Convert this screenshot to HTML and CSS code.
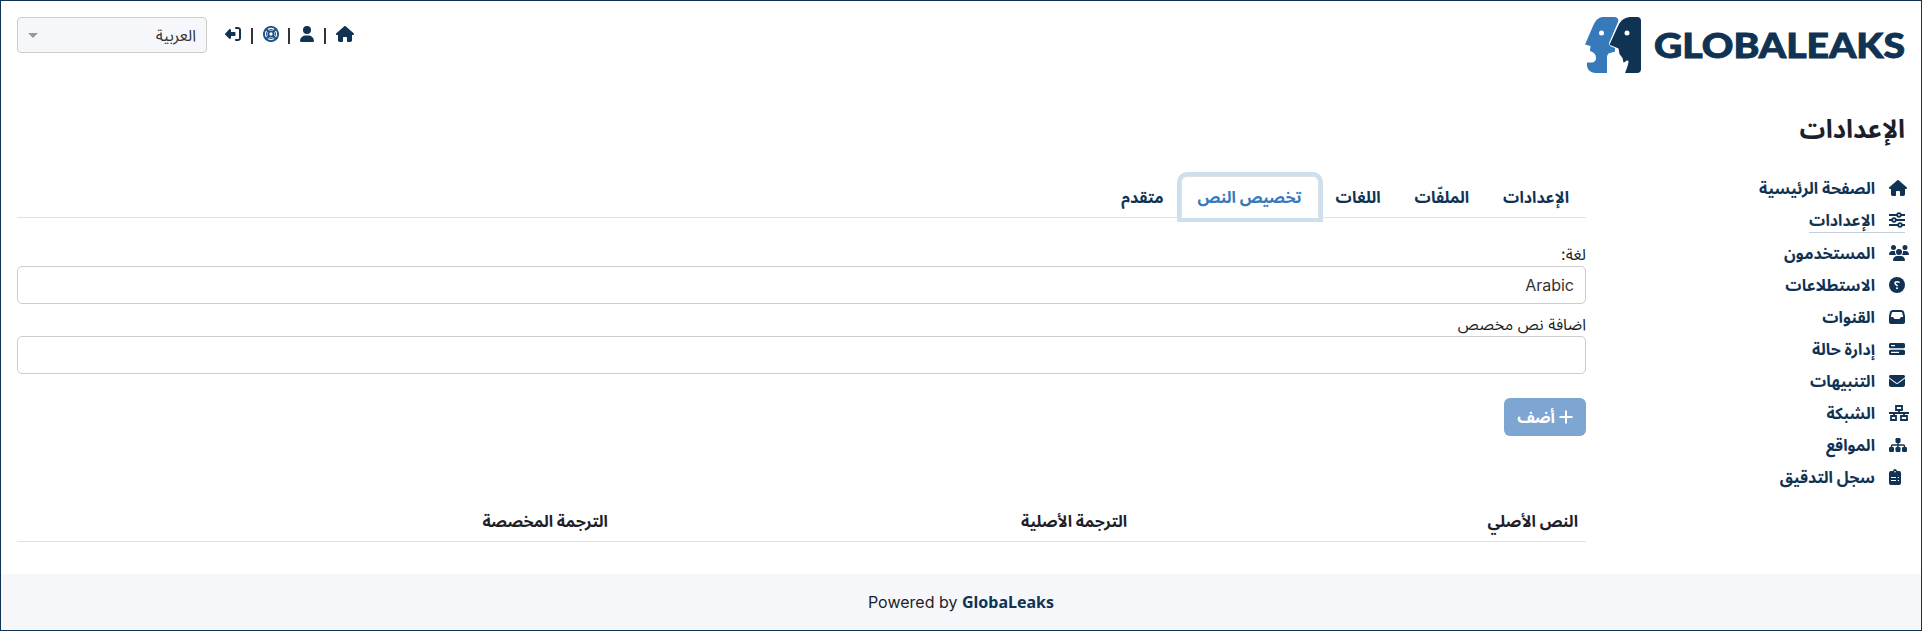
FILE: index.html
```html
<!DOCTYPE html>
<html lang="ar" dir="rtl">
<head>
<meta charset="utf-8">
<title>GlobaLeaks</title>
<link rel="stylesheet" href="styles.css">
</head>
<body>
<div class="page">
  <header class="header">
    <svg class="logo" viewBox="0 0 320 56" width="320" height="56" direction="ltr">
      <path fill="#377abc" d="M17 0H30Q34.500 1 33 5L24 26Q24 28 26 29.500L30 31V34.500L23.500 36.500L22 39V56H10Q3 55 2 49V45.500L7.700 45.500Q11 44 11 41Q11 36 6 34.500L5 33.500L5.500 29L0 27.500L8 9Q11 1 17 0Z"/>
      <path fill="#103253" d="M45 0H52Q56 0 56 4V52Q56 56 52 56H40L42.300 50L43.700 44.500Q42 42.500 40 45L38.500 45.500L37.500 41L34.500 37L33.500 31.500L30 30L25 28V26.500L34 7Q37 1 45 0Z"/>
      <circle cx="16.500" cy="16" r="2.500" fill="#fff"/><circle cx="42" cy="16" r="2.500" fill="#fff"/>
      <text class="logo-text" x="69" y="40.500" textLength="251" lengthAdjust="spacingAndGlyphs">GLOBALEAKS</text>
    </svg>
    <div class="tools">
      <nav class="quick">
        <svg width="18" height="16" viewBox="0 0 576 512"><use href="#home"/></svg><i></i>
        <svg width="14" height="16" viewBox="0 0 448 512"><path d="M224 256a128 128 0 1 0 0-256 128 128 0 1 0 0 256zm-46 48C80 304 0 384 0 482c0 17 13 30 30 30h388c17 0 30-13 30-30 0-98-80-178-178-178z"/></svg><i></i>
        <svg class="ring" width="16" height="16" viewBox="0 0 16 16"><circle cx="8" cy="8" r="7.100"/><circle cx="8" cy="8" r="2.600"/><path d="M3 3l3 3m4 4l3 3M13 3l-3 3m-4 4l-3 3"/><circle class="thin" cx="8" cy="8" r="4.500"/></svg><i></i>
        <svg width="16" height="16" viewBox="0 0 512 512"><path d="M352 96h64c18 0 32 14 32 32v256c0 18-14 32-32 32h-64c-18 0-32 14-32 32s14 32 32 32h64c53 0 96-43 96-96V128c0-53-43-96-96-96h-64c-18 0-32 14-32 32s14 32 32 32zM9 239c-12 12-12 31 0 43l121 121c7 7 16 11 26 11 20 0 36-16 36-36v-58h112c18 0 32-14 32-32v-64c0-18-14-32-32-32H192v-58c0-20-16-36-36-36-10 0-19 4-26 11z"/></svg>
      </nav>
      <div class="lang"><span>العربية</span><b></b></div>
    </div>
  </header>
  <h1>الإعدادات</h1>
  <div class="columns">
    <nav class="side">
      <a><svg width="18" height="16" viewBox="0 0 576 512"><path id="home" d="M576 256c0 18-15 32-32 32h-32l1 160c0 35-20 64-56 64h-73c-18 0-32-14-32-32v-96c0-18-14-32-32-32h-64c-18 0-32 14-32 32v96c0 18-14 32-32 32h-72c-36 0-56-29-56-56V288H32c-18 0-32-14-32-32 0-9 3-17 10-24L266 8c7-7 15-8 22-8s15 2 21 7l255 225c8 7 12 15 12 24z"/></svg><span>الصفحة الرئيسية</span></a>
      <a class="active"><svg class="line" width="16" height="16" viewBox="0 0 16 16"><path d="M0 3h8m4 0h4M0 8h3m4 0h9M0 13h9m4 0h3"/><circle cx="10" cy="3" r="1.800"/><circle cx="5" cy="8" r="1.800"/><circle cx="11" cy="13" r="1.800"/></svg><span>الإعدادات</span></a>
      <a><svg width="20" height="16" viewBox="0 0 640 512"><path d="M144 0a80 80 0 1 1 0 160 80 80 0 1 1 0-160zm368 0a80 80 0 1 1 0 160 80 80 0 1 1 0-160zM0 299c0-59 48-107 107-107h43c16 0 31 4 44 10-7 46 10 89 41 118H21c-12 0-21-10-21-21zm405 21c32-29 48-72 41-118 14-6 28-10 44-10h43c59 0 107 48 107 107 0 12-10 21-21 21zM224 224a96 96 0 1 1 192 0 96 96 0 1 1-192 0zm-96 261c0-73 60-133 133-133h118c73 0 133 60 133 133 0 15-12 27-27 27H155c-15 0-27-12-27-27z"/></svg><span>المستخدمون</span></a>
      <a><svg width="16" height="16" viewBox="0 0 16 16"><circle cx="8" cy="8" r="8"/><path fill="none" stroke="#fff" stroke-width="1.500" d="M10.500 5.800Q10 4.700 8.300 4.700Q6 4.700 6 6.300Q6 7.300 8 8.300V9.300"/><circle cx="8" cy="11.300" r="1" fill="#fff"/></svg><span>الاستطلاعات</span></a>
      <a><svg width="16" height="16" viewBox="0 0 512 512"><path fill-rule="evenodd" d="M121 32c-44 0-82 30-93 73L3 206c-2 8-3 17-3 25v185c0 35 29 64 64 64h384c35 0 64-29 64-64V231c0-8-1-17-3-25l-25-101c-11-43-49-73-93-73zm0 64h270c15 0 27 10 31 24l34 136h-61c-12 0-23 7-29 18l-12 25c-5 10-16 17-28 17H186c-12 0-23-7-28-17l-13-25c-5-11-16-18-28-18H56l34-136c4-14 16-24 31-24z"/></svg><span>القنوات</span></a>
      <a><svg width="16" height="16" viewBox="0 0 16 16"><rect y="2" width="16" height="5.300" rx="1.500"/><rect y="8.700" width="16" height="5.300" rx="1.500"/><path fill="none" stroke="#fff" stroke-width="1.200" d="M2 4.600h4M2 11.300h8"/></svg><span>إدارة حالة</span></a>
      <a><svg width="16" height="16" viewBox="0 0 512 512"><path d="M48 64C22 64 0 86 0 112c0 15 7 29 19 38l218 164c11 8 27 8 38 0l218-164c12-9 19-23 19-38 0-26-22-48-48-48zM0 176v208c0 35 29 64 64 64h384c35 0 64-29 64-64V176L294 339c-23 17-53 17-76 0z"/></svg><span>التنبيهات</span></a>
      <a><svg class="line" width="20" height="16" viewBox="0 0 20 16"><path d="M0 8h20M10 6v2M5 8v3M15 8v3M7 1h6v4H7zM2 11h5v4H2zM12 11h6v4h-6z"/></svg><span>الشبكة</span></a>
      <a><svg width="18" height="16" viewBox="0 0 18 16"><rect x="6.500" y="1" width="5" height="5" rx="1.200"/><rect y="10" width="5" height="5" rx="1.200"/><rect x="6.500" y="10" width="5" height="5" rx="1.200"/><rect x="13" y="10" width="5" height="5" rx="1.200"/><path fill="none" stroke="#103253" stroke-width="1.400" d="M9 5v6M2.500 11V9Q2.500 8 3.500 8h11q1 0 1 1v2"/></svg><span>المواقع</span></a>
      <a><svg width="12" height="16" viewBox="0 0 12 16"><path d="M2 2h2q.4-2 2-2t2 2h2q2 0 2 2v10q0 2-2 2H2q-2 0-2-2V4q0-2 2-2z"/><circle cx="6" cy="2.700" r=".8" fill="#fff"/><path fill="none" stroke="#fff" d="M2 8.500h5M8.800 8.500h1.200M2 11.500h5M8.800 11.500h1.200"/></svg><span>سجل التدقيق</span></a>
    </nav>
    <main class="main">
      <div class="tabs"><a>الإعدادات</a><a>الملفّات</a><a>اللغات</a><a class="current">تخصيص النص</a><a>متقدم</a></div>
      <label>لغة:</label>
      <div class="field">Arabic</div>
      <label>اضافة نص مخصص</label>
      <div class="field"></div>
      <button class="add"><svg width="14" height="16" viewBox="0 0 14 16"><path d="M7 1.500v13M.5 8h13" stroke="#fff" stroke-width="2"/></svg><span>أضف</span></button>
      <div class="thead"><b class="c1">النص الأصلي</b><b class="c2">الترجمة الأصلية</b><b class="c3">الترجمة المخصصة</b></div>
    </main>
  </div>
  <footer class="footer" dir="ltr"><span>Powered by <b>GlobaLeaks</b></span></footer>
</div>
</body>
</html>
```
FILE: styles.css
```css
* { box-sizing: border-box; }
body { margin: 0; background: #fff; color: #1d1f2a; font: 16px/24px Inter, "Noto Sans Arabic", "Noto Sans", sans-serif; }
.page { height: 631px; border: 1px solid #103253; display: flex; flex-direction: column; }
.header { display: flex; justify-content: space-between; padding: 16px 16px 0; height: 96px; }
.logo-text { font: 900 34.5px Lato, sans-serif; fill: #103253; stroke: #103253; stroke-width: .9; }
svg { fill: #103253; flex: none; }
.tools { display: flex; gap: 18px; }
.quick { display: flex; height: 34px; align-items: center; gap: 9.8px; }
.quick i { width: 2px; height: 16px; background: #34343f; margin-top: 3px; }
.ring { fill: none; stroke: #1f5287; stroke-width: 1.9; }
.ring .thin { stroke-width: 1; }
.lang { width: 190px; height: 36px; border: 1px solid #ccc; border-radius: 4px; background: #f5f7fb; display: flex; align-items: center; justify-content: space-between; padding: 0 10px; color: #333; }
.lang b { border: 5px solid transparent; border-top-color: #999; border-bottom: 0; }
h1 { margin: 16px 16px 0; font-size: 25.6px; line-height: 32px; font-weight: 700; }
.columns { display: flex; padding: 0 16px; height: 429px; }
.side { width: 319px; padding-top: 31px; display: flex; flex-direction: column; align-items: flex-start; gap: 8px; font-weight: 700; color: #103253; }
.side a { display: flex; align-items: center; gap: 14px; }
/* Icons share one 16px column; wider ones overhang, narrower ones are padded. */
.side a svg { overflow: visible; }
.side a svg[width="18"] { margin-right: -2px; }
.side a svg[width="20"] { margin-right: -4px; }
.side a svg[width="12"] { margin-right: 4px; }
.side .active { border-bottom: 1px solid #c3cddd; }
.line { fill: #fff; stroke: #103253; stroke-width: 1.8; }
.main { flex: 1; min-width: 0; display: flex; flex-direction: column; align-items: stretch; padding-top: 31px; }
.tabs { display: flex; height: 42px; border-bottom: 1px solid #dee2e6; font-weight: 700; color: #103253; margin-bottom: 24px; }
.tabs a { height: 42px; padding: 8px 16px; border: 1px solid transparent; }
.tabs .current { color: #377abc; background: #fff; border-color: #dee2e6 #dee2e6 #fff; border-radius: 6px 6px 0 0; box-shadow: 0 0 0 4px #cddeee; }
.field { height: 38px; border: 1px solid #ccc; border-radius: 5px; padding: 6px 11px; color: #333; margin-bottom: 8px; }
.add { align-self: flex-start; margin-top: 16px; width: 82px; height: 38px; padding: 0; border: 0; border-radius: 6px; background: #7da6d2; color: #fff; font: inherit; font-weight: 700; display: flex; align-items: center; justify-content: center; gap: 4px; }
.thead { margin-top: 65px; height: 41px; border-bottom: 1px solid #dee2e6; padding: 8px; display: flex; }
.c1 { width: 451px; }
.c2 { width: 519px; }
.footer { flex: 1; background: #f5f7fb; display: flex; align-items: center; justify-content: center; }
.footer b { font-family: "Noto Sans", sans-serif; color: #103253; }
```
